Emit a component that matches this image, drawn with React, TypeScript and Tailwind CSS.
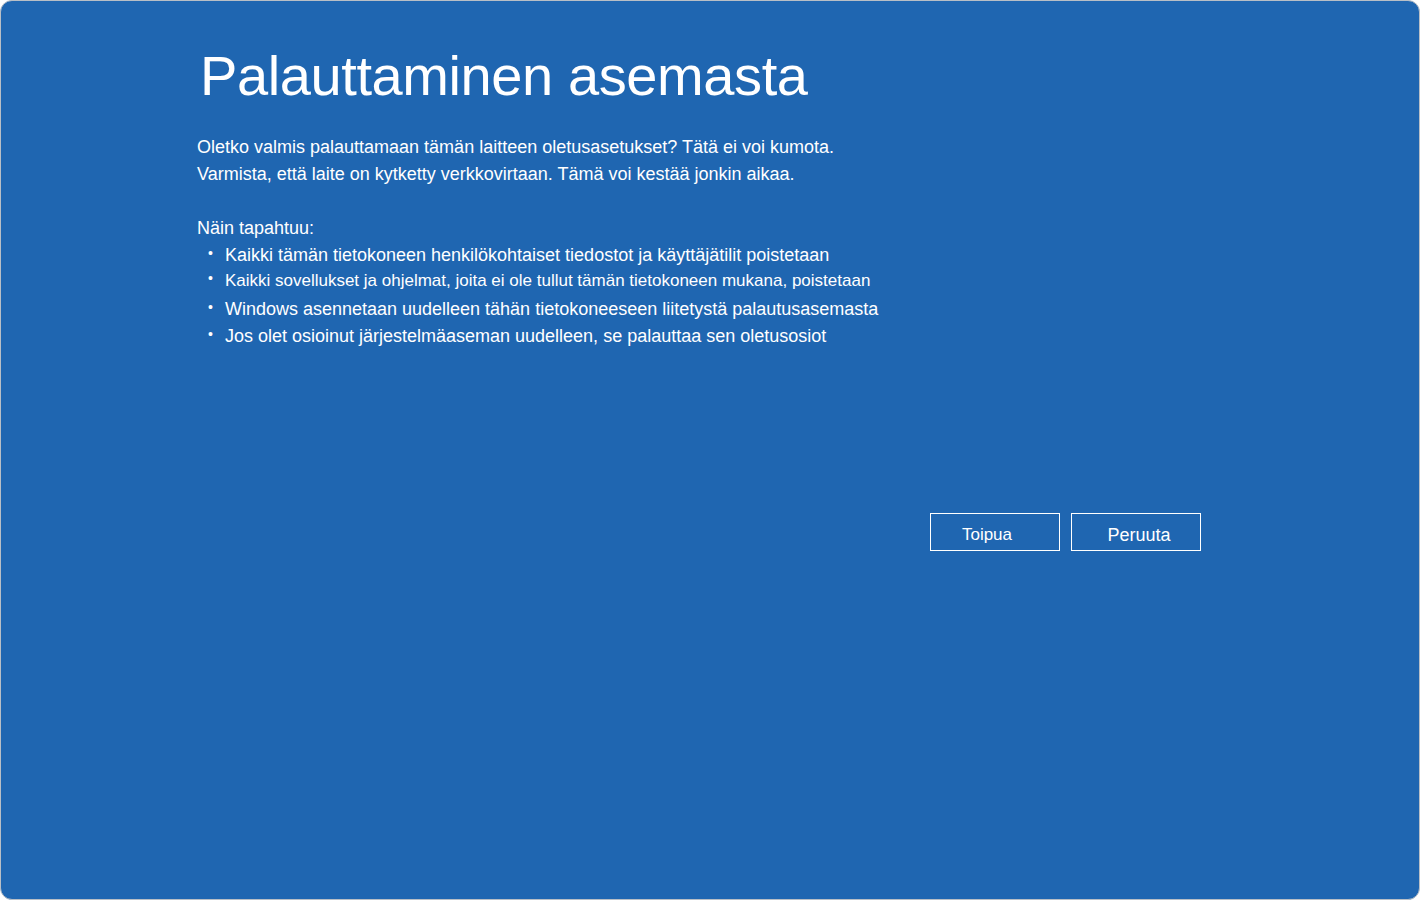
export default function App() {
  return (
    <div className="w-[1420px] h-[900px] bg-white font-['Liberation_Sans',Arial,sans-serif]">
      <div className="w-full h-full rounded-[12px] border border-[#b9bfc6] bg-[#1f66b1] text-white">
        <div className="pl-[199px] pt-[39px]">
          <h1 className="text-[56px] leading-[72px] tracking-[-0.4px]">Palauttaminen asemasta</h1>
        </div>

        <div className="pl-[196px] pt-[22px] text-[18px] leading-[27px]">
          <p>Oletko valmis palauttamaan tämän laitteen oletusasetukset? Tätä ei voi kumota.</p>
          <p>Varmista, että laite on kytketty verkkovirtaan. Tämä voi kestää jonkin aikaa.</p>

          <p className="mt-[27px]">Näin tapahtuu:</p>
          <ul className="pl-[11px]">
            <Bullet>Kaikki tämän tietokoneen henkilökohtaiset tiedostot ja käyttäjätilit poistetaan</Bullet>
            <Bullet small className="-mt-[2px]">
              Kaikki sovellukset ja ohjelmat, joita ei ole tullut tämän tietokoneen mukana, poistetaan
            </Bullet>
            <Bullet className="mt-[2px]">Windows asennetaan uudelleen tähän tietokoneeseen liitetystä palautusasemasta</Bullet>
            <Bullet>Jos olet osioinut järjestelmäaseman uudelleen, se palauttaa sen oletusosiot</Bullet>
          </ul>
        </div>

        <div className="flex justify-end gap-[11px] pr-[218px] pt-[163px]">
          <button className="w-[130px] h-[38px] border border-white text-[17px] pt-[5px] pr-[16px]">Toipua</button>
          <button className="w-[130px] h-[38px] border border-white text-[18px] pt-[6px] pl-[6px]">Peruuta</button>
        </div>
      </div>
    </div>
  );
}

function Bullet({
  children,
  small,
  className = '',
}: {
  children: React.ReactNode;
  small?: boolean;
  className?: string;
}) {
  return (
    <li className={'flex items-start gap-[12px] ' + className}>
      <span className="text-[14px] leading-[22px]">•</span>
      <span className={small ? 'text-[17px] leading-[27px]' : 'text-[18px] leading-[27px]'}>{children}</span>
    </li>
  );
}
